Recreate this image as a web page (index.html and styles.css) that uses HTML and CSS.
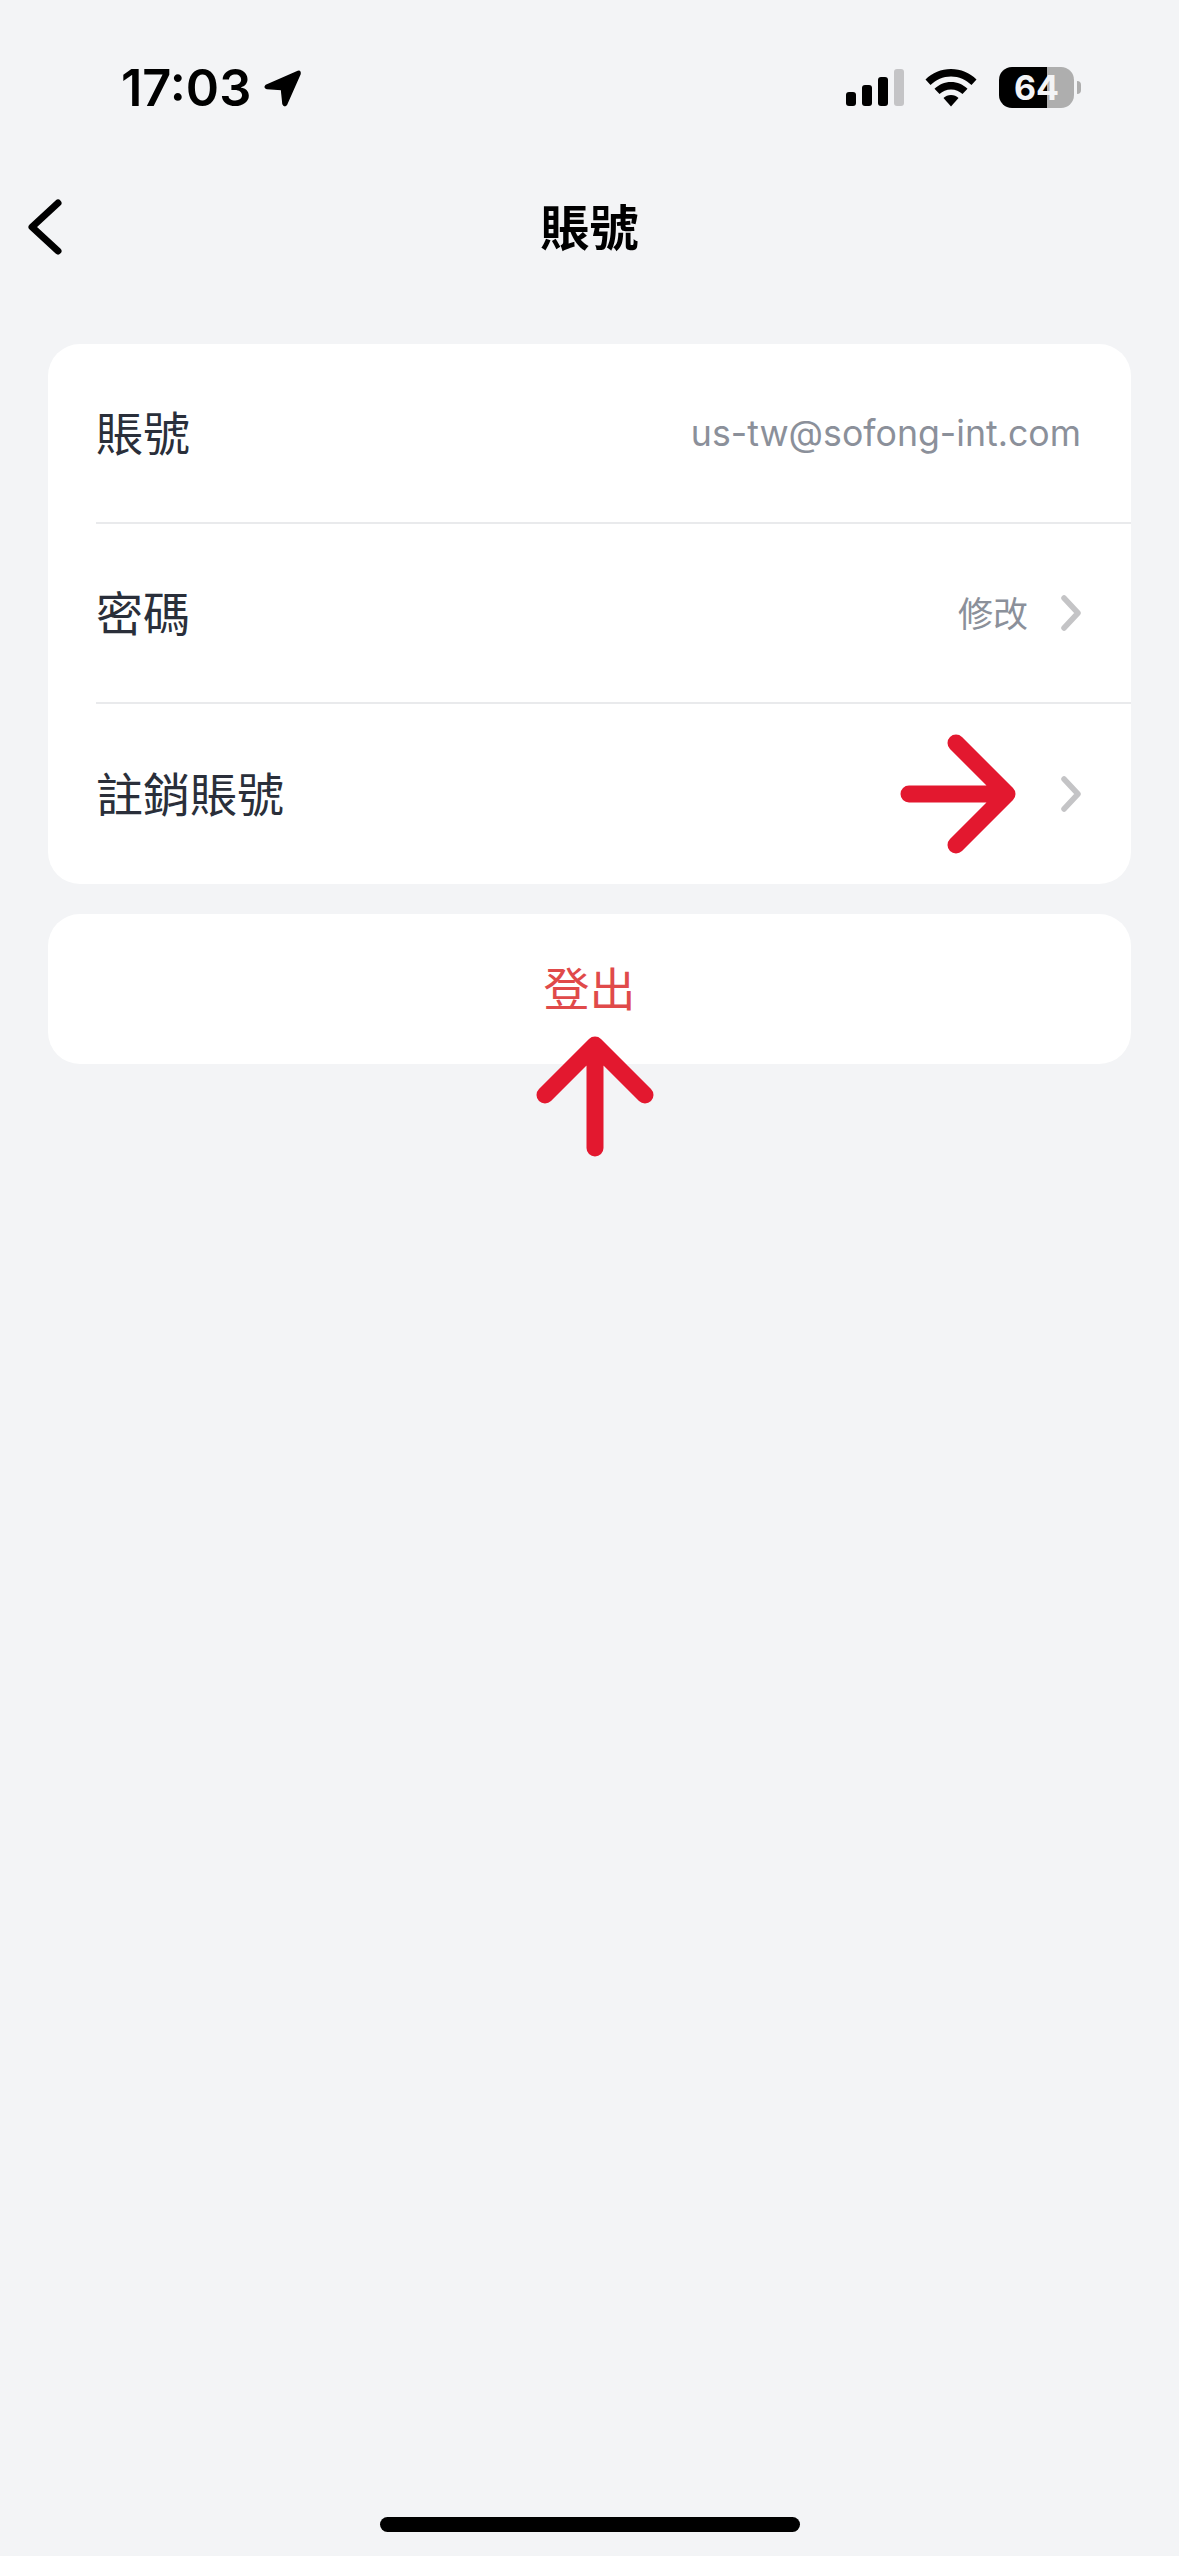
FILE: index.html
```html
<!DOCTYPE html>
<html lang="zh-Hant">
<head>
    <meta charset="UTF-8">
    <meta name="viewport" content="width=device-width, initial-scale=1.0">
    <title>賬號</title>
    <link rel="stylesheet" href="styles.css">
</head>
<body>
<div class="page">

    <div class="status">
        <div class="status-left">
            <span class="time">17:03</span>
            <svg class="loc" width="40" height="40" viewBox="0 0 40 40">
                <path d="M36 3.5 L4 17.5 Q2 19.5 5 20.5 L19.5 21.5 L21 36 Q22.5 39 24.5 36.5 L38 6 Q38.5 2.5 36 3.5 Z" fill="#000" stroke="#000" stroke-width="1.5" stroke-linejoin="round"/>
            </svg>
        </div>
        <div class="status-right">
            <svg class="signal" width="58" height="37" viewBox="0 0 58 37">
                <rect x="0" y="23" width="10" height="14" rx="3" fill="#000"/>
                <rect x="16" y="16" width="10" height="21" rx="3" fill="#000"/>
                <rect x="32" y="8" width="10" height="29" rx="3" fill="#000"/>
                <rect x="48" y="0" width="10" height="37" rx="3" fill="#c4c4c6"/>
            </svg>
            <svg class="wifi" width="52" height="38" viewBox="0 0 52 38">
                <path d="M26 0 C16 0 7.500 3.800 0.500 10.500 L5.500 16 C11 10.800 18 7.500 26 7.500 C34 7.500 41 10.800 46.500 16 L51.500 10.500 C44.500 3.800 36 0 26 0 Z" fill="#000"/>
                <path d="M26 13 C19.500 13 14 15.500 9.500 19.800 L14.500 25 C17.500 22.300 21.500 20.500 26 20.500 C30.500 20.500 34.500 22.300 37.500 25 L42.500 19.800 C38 15.500 32.500 13 26 13 Z" fill="#000"/>
                <path d="M26 26 C23 26 20.500 27 18.500 29 L26 37.500 L33.500 29 C31.500 27 29 26 26 26 Z" fill="#000"/>
            </svg>
            <div class="battery">
                <div class="battery-body"><span class="battery-text">64</span></div>
                <div class="battery-nub"></div>
            </div>
        </div>
    </div>

    <div class="nav">
        <svg class="back" width="42" height="62" viewBox="0 0 42 62">
            <path d="M36 7 L10 31 L36 55" fill="none" stroke="#000" stroke-width="7" stroke-linecap="round" stroke-linejoin="round"/>
        </svg>
        <div class="nav-title">賬號</div>
    </div>

    <div class="content">
        <div class="card">
            <div class="row">
                <span class="label">賬號</span>
                <span class="value">us-tw@sofong-int.com</span>
            </div>
            <div class="row">
                <span class="label">密碼</span>
                <span class="value-cjk">修改</span>
                <svg class="chev" width="20" height="36" viewBox="0 0 20 36">
                    <path d="M3 3 L17 18 L3 33" fill="none" stroke="#c4c4c6" stroke-width="5.500" stroke-linecap="round" stroke-linejoin="round"/>
                </svg>
            </div>
            <div class="row">
                <span class="label">註銷賬號</span>
                <svg class="chev" width="20" height="36" viewBox="0 0 20 36">
                    <path d="M3 3 L17 18 L3 33" fill="none" stroke="#c4c4c6" stroke-width="5.500" stroke-linecap="round" stroke-linejoin="round"/>
                </svg>
            </div>
        </div>
        <div class="card logout"><span class="logout-text">登出</span></div>
    </div>

    <!-- red marks drawn on top of the screenshot -->
    <svg class="mark mark-right" width="130" height="120" viewBox="0 0 130 120">
        <path d="M10 60 L105 60 M57 9 L108 60 L57 111" fill="none" stroke="#e3182f" stroke-width="17" stroke-linecap="round" stroke-linejoin="round"/>
    </svg>
    <svg class="mark mark-up" width="120" height="130" viewBox="0 0 120 130">
        <path d="M60 121 L60 20 M10 68 L60 18 L110 68" fill="none" stroke="#e3182f" stroke-width="17" stroke-linecap="round" stroke-linejoin="round"/>
    </svg>

    <div class="home-bar"></div>
</div>
</body>
</html>
```

FILE: styles.css
```css
body {
    margin: 0;
    background: #f3f4f6;
    font-family: Inter, "Noto Sans CJK TC", sans-serif;
}
.page {
    position: relative;
    display: flex;
    flex-direction: column;
    height: 2556px;
    overflow: hidden;
}
.status {
    display: flex;
    justify-content: space-between;
    align-items: center;
    height: 130px;
    padding: 45px 98px 0 121px;
    box-sizing: border-box;
}
.status-left {
    display: flex;
    align-items: center;
    gap: 11px;
}
.time {
    font-size: 50.500px;
    font-weight: 600;
    line-height: 50px;
    color: #000;
}
.loc {
    display: block;
}
.status-right {
    display: flex;
    align-items: center;
}
.signal {
    display: block;
    margin-right: 21px;
}
.wifi {
    display: block;
    margin-right: 22px;
}
.battery {
    display: flex;
    align-items: center;
    gap: 3px;
}
.battery-body {
    display: flex;
    align-items: center;
    justify-content: center;
    width: 75px;
    height: 41px;
    border-radius: 13px;
    background: linear-gradient(to right, #000 48px, #aeaeae 48px);
}
.battery-text {
    font-size: 34px;
    font-weight: 700;
    color: #f3f4f6;
    line-height: 41px;
}
.battery-nub {
    width: 4px;
    height: 13px;
    border-radius: 0 6px 6px 0;
    background: #aeaeae;
}
.nav {
    position: relative;
    display: flex;
    align-items: center;
    justify-content: center;
    height: 194px;
}
.back {
    position: absolute;
    left: 22px;
    top: 66px;
}
.nav-title {
    font-size: 49px;
    font-weight: 700;
    color: #000;
    padding-bottom: 6px;
}
.content {
    display: flex;
    flex-direction: column;
    gap: 30px;
    padding: 20px 48px 0;
}
.card {
    background: #fff;
    border-radius: 32px;
}
.row {
    display: flex;
    align-items: center;
    height: 180px;
    box-sizing: border-box;
    margin-left: 48px;
    padding-right: 50px;
    border-bottom: 2px solid #e9eaec;
}
.row:last-child {
    border-bottom: none;
}
.label {
    flex: 1;
    font-size: 47px;
    color: #2a2f3a;
    padding-bottom: 5px;
}
.value {
    font-size: 35.700px;
    color: #8b909a;
}
.value-cjk {
    font-size: 35px;
    color: #8b909a;
    margin-right: 33px;
    padding-bottom: 4px;
}
.chev {
    display: block;
}
.logout {
    display: flex;
    align-items: center;
    justify-content: center;
    height: 150px;
    font-size: 46px;
    color: #e04a4a;
}
.logout-text {
    padding-bottom: 6px;
}
.mark {
    position: absolute;
}
.mark-right {
    left: 899px;
    top: 734px;
}
.mark-up {
    left: 535px;
    top: 1027px;
}
.home-bar {
    position: absolute;
    left: 380px;
    top: 2517px;
    width: 420px;
    height: 15px;
    border-radius: 8px;
    background: #000;
}
```
